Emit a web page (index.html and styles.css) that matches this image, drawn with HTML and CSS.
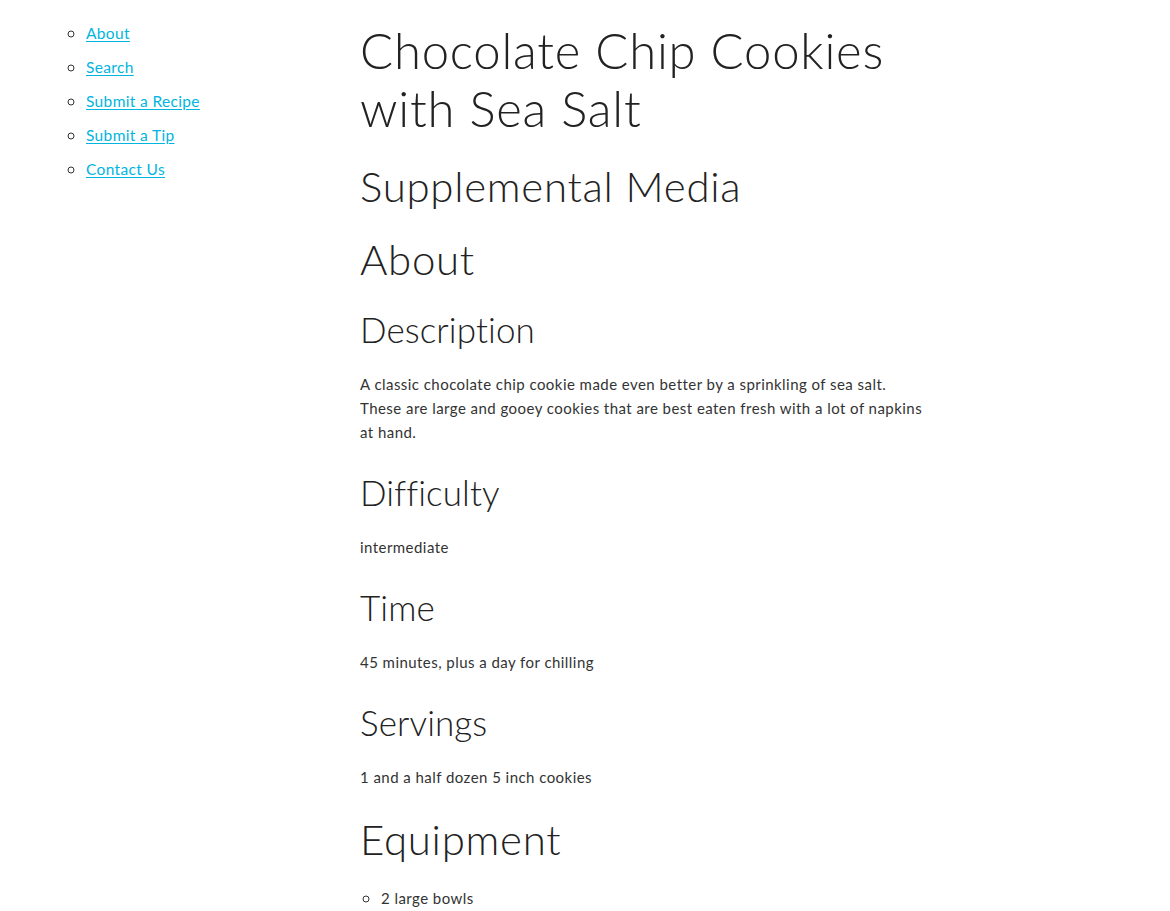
FILE: index.html
```html
<!DOCTYPE html>
<html lang="en">
<head>
<meta charset="utf-8">
<title>Chocolate Chip Cookies with Sea Salt</title>
<link rel="stylesheet" href="styles.css">
</head>
<body>
<div class="page">
  <nav class="sidebar">
    <ul class="nav-list">
      <li><a href="#">About</a></li>
      <li><a href="#">Search</a></li>
      <li><a href="#">Submit a Recipe</a></li>
      <li><a href="#">Submit a Tip</a></li>
      <li><a href="#">Contact Us</a></li>
    </ul>
  </nav>
  <main class="content">
    <h1 class="title">Chocolate Chip Cookies with Sea Salt</h1>
    <h2 class="section">Supplemental Media</h2>
    <h2 class="section">About</h2>
    <h3 class="sub first">Description</h3>
    <p class="text">A classic chocolate chip cookie made even better by a sprinkling of sea salt. These are large and gooey cookies that are best eaten fresh with a lot of napkins at hand.</p>
    <h3 class="sub">Difficulty</h3>
    <p class="text">intermediate</p>
    <h3 class="sub">Time</h3>
    <p class="text">45 minutes, plus a day for chilling</p>
    <h3 class="sub">Servings</h3>
    <p class="text">1 and a half dozen 5 inch cookies</p>
    <h2 class="section after-text">Equipment</h2>
    <ul class="items">
      <li>2 large bowls</li>
    </ul>
  </main>
</div>
</body>
</html>
```

FILE: styles.css
```css
html, body {
  margin: 0;
  padding: 0;
  background: #ffffff;
}

body {
  font-family: "Lato", "Open Sans", sans-serif;
  color: #333333;
  font-size: 15px;
  line-height: 24px;
}

.page {
  display: flex;
  padding-left: 46px;
}

.sidebar {
  width: 314px;
  flex: none;
}

.nav-list {
  list-style: circle;
  margin: 21px 0 0;
  padding-left: 40px;
}

.nav-list li {
  line-height: 24px;
  margin-bottom: 10px;
  font-size: 15.5px;
  letter-spacing: 0.35px;
}

.nav-list li::marker {
  color: #333333;
  font-size: 17px;
}

.nav-list a {
  color: #00b5e0;
  text-decoration: underline;
  text-underline-offset: 2px;
}

.content {
  width: 568px;
  flex: none;
}

.title {
  font-weight: 300;
  font-size: 49px;
  line-height: 58px;
  margin: 21px 0 0;
  color: #222222;
  letter-spacing: 0.8px;
}

.section {
  font-weight: 300;
  font-size: 42px;
  line-height: 48px;
  margin: 25px 0 0;
  color: #222222;
  letter-spacing: 0.7px;
}

.section.after-text {
  margin-top: 26px;
}

.sub {
  font-weight: 300;
  font-size: 35px;
  line-height: 40px;
  margin: 28px 0 0;
  color: #222222;
  letter-spacing: 0.1px;
}

.sub.first {
  margin-top: 26px;
}

.text {
  margin: 23px 0 0;
  font-size: 15px;
  line-height: 24px;
  color: #333333;
  letter-spacing: 0.45px;
}

.items {
  list-style: circle;
  margin: 23px 0 0;
  padding-left: 21px;
}

.items li {
  line-height: 24px;
  letter-spacing: 0.45px;
}

.items li::marker {
  font-size: 17px;
}
```
